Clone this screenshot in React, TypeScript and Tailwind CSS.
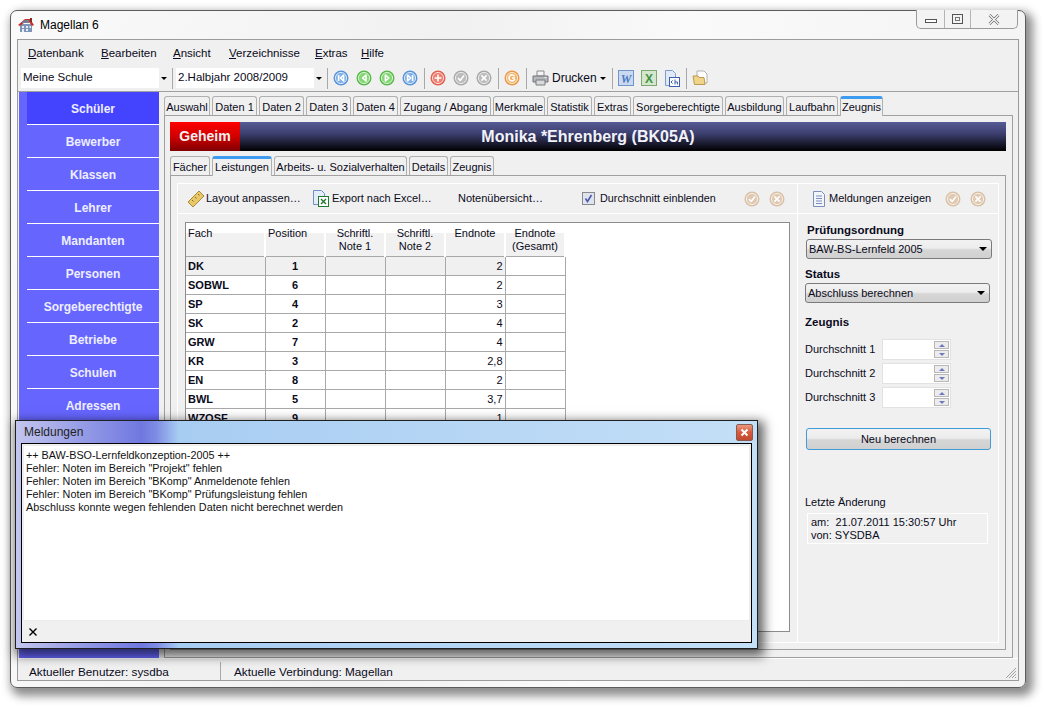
import type { ReactNode } from "react";

const ui = "font-['Liberation_Sans',sans-serif] text-[11px] text-[#0a0a20]";

const menu = [
  { label: "Datenbank", cls: "w-[73px]" },
  { label: "Bearbeiten", cls: "w-[72px]" },
  { label: "Ansicht", cls: "w-[56px]" },
  { label: "Verzeichnisse", cls: "w-[86px]" },
  { label: "Extras", cls: "w-[46px]" },
  { label: "Hilfe", cls: "w-[40px]" },
];

const topTabs = [
  { label: "Auswahl", cls: "w-[46px]" },
  { label: "Daten 1", cls: "w-[45px]" },
  { label: "Daten 2", cls: "w-[45px]" },
  { label: "Daten 3", cls: "w-[45px]" },
  { label: "Daten 4", cls: "w-[45px]" },
  { label: "Zugang / Abgang", cls: "w-[91px]" },
  { label: "Merkmale", cls: "w-[52px]" },
  { label: "Statistik", cls: "w-[45px]" },
  { label: "Extras", cls: "w-[37px]" },
  { label: "Sorgeberechtigte", cls: "w-[90px]" },
  { label: "Ausbildung", cls: "w-[59px]" },
  { label: "Laufbahn", cls: "w-[52px]" },
  { label: "Zeugnis", cls: "w-[43px]", active: true },
];

const innerTabs = [
  { label: "Fächer", cls: "w-[40px]" },
  { label: "Leistungen", cls: "w-[60px]", active: true },
  { label: "Arbeits- u. Sozialverhalten", cls: "w-[133px]" },
  { label: "Details", cls: "w-[39px]" },
  { label: "Zeugnis", cls: "w-[44px]" },
];

const nav = ["Schüler", "Bewerber", "Klassen", "Lehrer", "Mandanten", "Personen", "Sorgeberechtigte", "Betriebe", "Schulen", "Adressen"];

const rows = [
  ["DK", "1", "2"],
  ["SOBWL", "6", "2"],
  ["SP", "4", "3"],
  ["SK", "2", "4"],
  ["GRW", "7", "4"],
  ["KR", "3", "2,8"],
  ["EN", "8", "2"],
  ["BWL", "5", "3,7"],
  ["WZOSF", "9", "1"],
];

function Orb({ color, light, glyph }: { color: string; light: string; glyph: string }) {
  return (
    <svg width="16" height="16" viewBox="0 0 16 16" className="shrink-0">
      <circle cx="8" cy="8" r="7.5" fill={color} />
      <circle cx="8" cy="8" r="5.6" fill={light} stroke="#ffffff" strokeOpacity="0.75" strokeWidth="1" />
      <path d={glyph} fill="none" stroke="#ffffff" strokeWidth="1.6" strokeLinejoin="round" />
    </svg>
  );
}

const G_FIRST = "M5.6 5v6M10.6 5.2 7.4 8l3.2 2.8z";
const G_PREV = "M10 5 6.6 8l3.4 3z";
const G_NEXT = "M6.4 5 9.8 8l-3.4 3z";
const G_LAST = "M10.6 5v6M5.6 5.2 8.8 8l-3.2 2.8z";
const G_PLUS = "M8 4.6v6.8M4.6 8h6.8";
const G_CHECK = "M5 8l2.2 2.4L11 5.6";
const G_X = "M5.4 5.4l5.2 5.2M10.6 5.4l-5.2 5.2";
const G_C = "M10.6 6.4A3 3 0 1 0 10.8 9M8 8h3";

function Sep({ cls }: { cls: string }) {
  return <div className={`h-[21px] w-px shrink-0 bg-[#a8a8a8] ${cls}`} />;
}

function Combo({ label }: { label: string }) {
  return (
    <div className="flex h-[20px] w-[147px] shrink-0 items-center justify-between bg-white pl-[2px]">
      <span className="text-[11.5px]">{label}</span>
      <span className="flex h-full w-[9px] items-center justify-center bg-[#f0f0f0]">
        <span className="h-0 w-0 border-x-[3px] border-t-[3px] border-x-transparent border-t-black" />
      </span>
    </div>
  );
}

function Tab({ label, cls, active }: { label: string; cls: string; active?: boolean }) {
  return (
    <div
      className={`relative flex items-center justify-center rounded-t-[3px] border border-b-0 border-[#b0b0b0] bg-[#f0f0f0] whitespace-nowrap ${cls} ${
        active ? "z-10 -mb-px h-[20px] border-t-[3px] border-t-[#3d9bf0]" : "h-[19px] pt-[2px]"
      }`}
    >
      {label}
    </div>
  );
}

function Select({ label, cls }: { label: string; cls: string }) {
  return (
    <div className={`flex h-[20px] items-center justify-between rounded-[3px] border border-[#7a7a7a] bg-[linear-gradient(#f2f2f2_0%,#ececec_45%,#d6d6d6_55%,#d0d0d0_100%)] pr-[4px] pl-[2px] ${cls}`}>
      <span>{label}</span>
      <span className="h-0 w-0 border-x-[4px] border-t-[4px] border-x-transparent border-t-black" />
    </div>
  );
}

function Spin({ label }: { label: string }) {
  return (
    <div className="flex h-[21px] items-center">
      <span className="w-[77px] whitespace-nowrap">{label}</span>
      <div className="flex h-[21px] w-[69px] items-center justify-end border border-[#e2e2e2] bg-white pr-[1px]">
        <div className="flex flex-col gap-px">
          <span className="flex h-[8px] w-[15px] items-center justify-center border border-[#b8b8b8] bg-[#ececec]">
            <span className="h-0 w-0 border-x-[3px] border-b-[3px] border-x-transparent border-b-[#6f78c0]" />
          </span>
          <span className="flex h-[8px] w-[15px] items-center justify-center border border-[#b8b8b8] bg-[#ececec]">
            <span className="h-0 w-0 border-x-[3px] border-t-[3px] border-x-transparent border-t-[#6f78c0]" />
          </span>
        </div>
      </div>
    </div>
  );
}

function Th({ children, cls }: { children: ReactNode; cls: string }) {
  return (
    <th className={`border-r-2 border-r-white bg-[linear-gradient(#ffffff_0%,#ffffff_30%,#f1f1f1_30%,#f1f1f1_100%)] px-[2px] pt-[4px] align-top font-normal leading-[13px] ${cls}`}>
      {children}
    </th>
  );
}

export default function App() {
  return (
    <div className={`relative h-[707px] w-[1044px] overflow-hidden bg-white pt-[10px] pl-[10px] ${ui}`}>
      {/* main window */}
      <div className="flex h-[678px] w-[1016px] flex-col rounded-[7px] border border-[#5c5c5c] bg-[linear-gradient(100deg,#fafafa_0%,#f1f1f1_40%,#fafafa_60%,#f2f2f2_100%)] px-[6px] pb-[6px] shadow-[4px_5px_10px_3px_rgba(0,0,0,0.45)]">
        <div className="relative flex h-[28px] shrink-0 items-center">
          <svg width="16" height="16" viewBox="0 0 16 16" className="ml-[1px] shrink-0">
            <path d="M2 7h12v8H2z" fill="#7d95b8" />
            <path d="M4 9h2v2H4zM8 9h2v2H8zM11.5 9h1.5v2h-1.5zM4 12h2v3H4zM8 12h2v2H8z" fill="#e8eef8" />
            <path d="M0 8 7 2h5l4 6-2 1-3-4-4 0-5 4z" fill="#c9302a" />
            <path d="M3 6h8V3H7z" fill="#6e7f98" />
            <path d="M12 1h2v4h-2z" fill="#8a2a20" />
          </svg>
          <span className="ml-[6px] text-[12px] leading-none text-black">Magellan 6</span>
          <div className="absolute top-[-1px] right-[1px] flex h-[19px] w-[102px] rounded-b-[5px] border border-t-0 border-[#9a9a9a] bg-[#f3f3f3]">
            <div className="flex w-[28px] items-end justify-center border-r border-[#b5b5b5] pb-[5px]">
              <span className="h-[4px] w-[12px] border border-[#555] bg-white" />
            </div>
            <div className="flex w-[26px] items-center justify-center border-r border-[#b5b5b5]">
              <span className="flex h-[10px] w-[11px] items-center justify-center border border-[#555]">
                <span className="h-[4px] w-[5px] border border-[#777]" />
              </span>
            </div>
            <div className="flex flex-1 items-center justify-center">
              <svg width="12" height="11" viewBox="0 0 12 11">
                <path d="M1.5 1 10.5 10M10.5 1 1.5 10" stroke="#666" strokeWidth="2.6" />
                <path d="M1.5 1 10.5 10M10.5 1 1.5 10" stroke="#fff" strokeWidth="1.2" />
              </svg>
            </div>
          </div>
        </div>

        <div className="flex min-h-0 flex-1 flex-col border border-[#9b9b9b] bg-[#f0f0f0]">
          {/* menu */}
          <div className="flex h-[25px] shrink-0 items-center pt-[2px] pl-[10px] text-[11.5px]">
            {menu.map((m) => (
              <span key={m.label} className={m.cls}>
                <span className="underline">{m.label[0]}</span>
                {m.label.slice(1)}
              </span>
            ))}
          </div>

          {/* toolbar */}
          <div className="flex h-[27px] shrink-0 items-center border-b border-[#a0a0a0] pl-[3px]">
            <Combo label="Meine Schule" />
            <Sep cls="ml-[4px] mr-[3px]" />
            <Combo label="2.Halbjahr 2008/2009" />
            <Sep cls="ml-[4px] mr-[5px]" />
            <div className="flex items-center gap-[7px]">
              <Orb color="#5b93d8" light="#7fb2ea" glyph={G_FIRST} />
              <Orb color="#58b84a" light="#84d874" glyph={G_PREV} />
              <Orb color="#58b84a" light="#84d874" glyph={G_NEXT} />
              <Orb color="#5b93d8" light="#7fb2ea" glyph={G_LAST} />
            </div>
            <Sep cls="ml-[6px] mr-[5px]" />
            <div className="flex items-center gap-[7px]">
              <Orb color="#e0604f" light="#f0806f" glyph={G_PLUS} />
              <Orb color="#a8a8a8" light="#bcbcbc" glyph={G_CHECK} />
              <Orb color="#a8a8a8" light="#bcbcbc" glyph={G_X} />
            </div>
            <Sep cls="ml-[6px] mr-[5px]" />
            <Orb color="#e89a48" light="#f4b468" glyph={G_C} />
            <Sep cls="ml-[6px] mr-[5px]" />
            <svg width="17" height="16" viewBox="0 0 17 16" className="shrink-0">
              <path d="M5 1h7v5H5z" fill="#f4f4f4" stroke="#8a8a8a" />
              <path d="M1 6h15v6H1z" fill="#b4b8bc" stroke="#70747a" />
              <path d="M4 10h9v5H4z" fill="#d8dade" stroke="#7a7a7a" />
              <path d="M12.5 7.5h2" stroke="#f0f0f0" />
            </svg>
            <span className="ml-[3px] text-[12px]">Drucken</span>
            <span className="ml-[3px] h-0 w-0 border-x-[3px] border-t-[3px] border-x-transparent border-t-black" />
            <Sep cls="ml-[6px] mr-[5px]" />
            <svg width="16" height="16" viewBox="0 0 16 16" className="shrink-0">
              <rect x="0.5" y="0.5" width="15" height="15" fill="#c9d9f0" stroke="#6f95cc" />
              <text x="8" y="13" textAnchor="middle" fontSize="12" fontWeight="bold" fontStyle="italic" fontFamily="Liberation Serif" fill="#4a78c0">W</text>
            </svg>
            <svg width="16" height="16" viewBox="0 0 16 16" className="ml-[7px] shrink-0">
              <rect x="0.5" y="0.5" width="15" height="15" fill="#d4e6cc" stroke="#7ea873" />
              <text x="8" y="12.5" textAnchor="middle" fontSize="12" fontWeight="bold" fontFamily="Liberation Sans" fill="#3f9146">X</text>
            </svg>
            <svg width="16" height="17" viewBox="0 0 16 17" className="ml-[7px] shrink-0">
              <path d="M1.5.5h7l3 3v12h-10z" fill="#dfe9f7" stroke="#7d9cc8" />
              <rect x="5.5" y="7.5" width="10" height="9" fill="#fff" stroke="#3c5fb0" />
              <path d="M7 12l1.6-1.6M7 12l1.6 1.6M11 9.5v5M11 12h2.4v2.5" fill="none" stroke="#3c5fb0" />
            </svg>
            <Sep cls="ml-[6px] mr-[5px]" />
            <svg width="16" height="16" viewBox="0 0 16 16" className="shrink-0">
              <path d="M5 1h7l3 3v9H5z" fill="#fff" stroke="#b0b0b0" />
              <path d="M1 6h5l1 1.5h5l1 7H2.5z" fill="#f0d48a" stroke="#b89a50" />
            </svg>
          </div>

          <div className="flex min-h-0 flex-1">
            {/* sidebar */}
            <div className="ml-px w-[140px] shrink-0 bg-[#6666ff] pl-[8px]">
              {nav.map((n, i) => (
                <div
                  key={n}
                  className={`flex h-[33px] items-center justify-center border-b border-white pt-px text-[12px] font-bold text-[#eeeeff] ${
                    i === 0 ? "bg-[#4444ff]" : ""
                  }`}
                >
                  {n}
                </div>
              ))}
            </div>

            {/* main */}
            <div className="flex min-w-0 flex-1 flex-col pt-[4px] pl-[5px]">
              <div className="flex shrink-0 gap-[2px]">
                {topTabs.map((t) => (
                  <Tab key={t.label} {...t} />
                ))}
              </div>
              <div className="flex w-[849px] flex-1 flex-col border border-[#a0a0a0] pt-[6px] pr-[6px] pl-[5px]">
                <div className="relative flex h-[29px] w-full shrink-0 items-center justify-center bg-[linear-gradient(#575c96_0%,#3c3f6e_40%,#000000_100%)] text-[16px] font-bold text-[#f2f2fa]">
                  Monika *Ehrenberg (BK05A)
                  <div className="absolute inset-y-0 left-0 flex w-[70px] items-center justify-center bg-[linear-gradient(#ff0000_0%,#d00000_50%,#800000_100%)] text-[14px] text-[#f5f0f0]">
                    Geheim
                  </div>
                </div>
                <div className="mt-[5px] flex shrink-0 gap-[2px]">
                  {innerTabs.map((t) => (
                    <Tab key={t.label} {...t} />
                  ))}
                </div>
                <div className="flex min-h-0 flex-1 flex-col border border-[#a0a0a0] px-[6px] pt-[7px] pb-[6px]">
                  <div className="flex flex-1 border border-white">
                    {/* left column */}
                    <div className="flex w-[620px] shrink-0 flex-col border-r border-white">
                      <div className="flex h-[30px] items-center border-b border-white">
                        <svg width="18" height="18" viewBox="0 0 18 18" className="ml-[9px] shrink-0">
                          <path d="M1 12 12 1l5 5L6 17z" fill="#e8c868" stroke="#a88a38" />
                          <path d="M5 10l1.5 1.5M8 7l1.5 1.5M11 4l1.5 1.5" stroke="#8a6f28" />
                        </svg>
                        <span className="ml-px w-[94px] shrink-0 whitespace-nowrap">Layout anpassen…</span>
                        <svg width="17" height="17" viewBox="0 0 17 17" className="ml-[12px] shrink-0">
                          <path d="M1.5.5h8l3 3v11h-11z" fill="#e4ecf8" stroke="#6f8fc8" />
                          <rect x="6.5" y="6.5" width="10" height="10" fill="#fff" stroke="#1f7a2f" />
                          <path d="M9 9l5 5M14 9l-5 5" stroke="#1f7a2f" strokeWidth="1.4" />
                        </svg>
                        <span className="ml-[3px] w-[97px] shrink-0 whitespace-nowrap">Export nach Excel…</span>
                        <span className="ml-[29px] w-[85px] shrink-0 whitespace-nowrap">Notenübersicht…</span>
                        <span className="ml-[39px] flex h-[13px] w-[13px] shrink-0 items-center justify-center border border-[#8a8a8a] bg-[#dfe3f0]">
                          <svg width="9" height="9" viewBox="0 0 9 9">
                            <path d="M1.5 4.5l2 3L7.5 1" fill="none" stroke="#4a5aa8" strokeWidth="1.6" />
                          </svg>
                        </span>
                        <span className="ml-[5px] w-[116px] shrink-0 text-[10.8px] whitespace-nowrap">Durchschnitt einblenden</span>
                        <div className="ml-[28px] flex shrink-0 gap-[9px]">
                          <Orb color="#d9bfa4" light="#e0c9b2" glyph={G_CHECK} />
                          <Orb color="#d9bfa4" light="#e0c9b2" glyph={G_X} />
                        </div>
                      </div>
                      <div className="mt-[8px] ml-[7px] h-[410px] w-[605px] border border-[#8c8c8c] bg-white">
                        <table className="table-fixed border-collapse">
                          <thead>
                            <tr className="h-[33px]">
                              <Th cls="w-[79px] text-left">Fach</Th>
                              <Th cls="w-[60px] text-left">Position</Th>
                              <Th cls="w-[60px] text-center">Schriftl.<br />Note 1</Th>
                              <Th cls="w-[60px] text-center">Schriftl.<br />Note 2</Th>
                              <Th cls="w-[60px] text-center">Endnote</Th>
                              <Th cls="w-[60px] text-center">Endnote<br />(Gesamt)</Th>
                            </tr>
                          </thead>
                          <tbody>
                            {rows.map((r, i) => (
                              <tr key={r[0]} className="h-[19px]">
                                <td className={`border border-l-0 border-[#a8a8a8] px-[2px] pt-px pb-0 font-bold leading-none ${i === 0 ? "bg-[#f0f0f0]" : ""}`}>{r[0]}</td>
                                <td className={`border border-[#a8a8a8] px-0 pt-px pb-0 text-center font-bold leading-none ${i === 0 ? "bg-[#f0f0f0]" : ""}`}>{r[1]}</td>
                                <td className={`border border-[#a8a8a8] ${i === 0 ? "bg-[#f0f0f0]" : ""}`} />
                                <td className={`border border-[#a8a8a8] ${i === 0 ? "bg-[#f0f0f0]" : ""}`} />
                                <td className={`border border-[#a8a8a8] px-[2px] pt-px pb-0 text-right leading-none ${i === 0 ? "bg-[#f0f0f0]" : ""}`}>{r[2]}</td>
                                <td className="border border-[#a8a8a8]" />
                              </tr>
                            ))}
                          </tbody>
                        </table>
                      </div>
                    </div>

                    {/* right column */}
                    <div className="flex min-w-0 flex-1 flex-col">
                      <div className="flex h-[30px] items-center border-b border-white">
                        <svg width="14" height="16" viewBox="0 0 14 16" className="ml-[14px] shrink-0">
                          <path d="M1.5.5h8l3 3v12h-11z" fill="#f2f5fb" stroke="#7d8fb8" />
                          <path d="M4 5h6M4 7.5h6M4 10h6M4 12.5h6" stroke="#7d8fb8" />
                        </svg>
                        <span className="ml-[3px] w-[98px] shrink-0 whitespace-nowrap">Meldungen anzeigen</span>
                        <div className="ml-[18px] flex shrink-0 gap-[9px]">
                          <Orb color="#d9bfa4" light="#e0c9b2" glyph={G_CHECK} />
                          <Orb color="#d9bfa4" light="#e0c9b2" glyph={G_X} />
                        </div>
                      </div>
                      <div className="flex flex-1 flex-col pl-[7px]">
                        <div className="mt-[9px] ml-[2px] text-[11.5px] leading-[14px] font-bold">Prüfungsordnung</div>
                        <Select label="BAW-BS-Lernfeld 2005" cls="ml-[1px] mt-[2px] w-[186px]" />
                        <div className="mt-[8px] text-[11.5px] leading-[14px] font-bold">Status</div>
                        <Select label="Abschluss berechnen" cls="mt-[2px] w-[185px]" />
                        <div className="mt-[12px] text-[11.5px] leading-[14px] font-bold">Zeugnis</div>
                        <div className="mt-[10px] flex flex-col gap-[3px]">
                          <Spin label="Durchschnitt 1" />
                          <Spin label="Durchschnitt 2" />
                          <Spin label="Durchschnitt 3" />
                        </div>
                        <button className="mt-[20px] ml-[1px] h-[22px] w-[185px] rounded-[3px] border border-[#3d9bd8] bg-[linear-gradient(#f2f2f2_0%,#ececec_45%,#d6d6d6_55%,#d0d0d0_100%)]">
                          Neu berechnen
                        </button>
                        <div className="mt-[45px] leading-[14px]">Letzte Änderung</div>
                        <div className="mt-[4px] ml-[2px] h-[31px] w-[181px] border border-white pt-[2px] pl-[3px] leading-[13px]">
                          am:&nbsp; 21.07.2011 15:30:57 Uhr
                          <br />
                          von: SYSDBA
                        </div>
                      </div>
                    </div>
                  </div>
                </div>
                <div className="h-[7px] shrink-0" />
              </div>
            </div>
          </div>

          {/* status bar */}
          <div className="relative flex h-[22px] shrink-0 items-center border-t border-white pt-[3px] text-[11.75px]">
            <span className="w-[202px] pt-px pl-[11px]">Aktueller Benutzer: sysdba</span>
            <span className="h-[18px] w-px self-end bg-[#a8a8a8]" />
            <span className="pt-px pl-[13px]">Aktuelle Verbindung: Magellan</span>
            <svg width="14" height="14" viewBox="0 0 14 14" className="absolute right-px bottom-px">
              <path d="M13 3 3 13M13 6 6 13M13 9l-4 4M13 12l-1 1" stroke="#a0a0a0" />
            </svg>
          </div>
        </div>
      </div>

      {/* message dialog */}
      <div className="absolute top-[420px] left-[15px] flex h-[229px] w-[743px] flex-col border border-[#202020] bg-[linear-gradient(90deg,#c3c6ee_0%,#9aa0e6_8%,#6f78e0_17%,#7f8ee4_19%,#a8cdf2_22%,#c4dff7_100%)] px-[5px] pb-[5px] shadow-[3px_4px_10px_3px_rgba(0,0,0,0.6)]">
        <div className="relative flex h-[22px] shrink-0 items-center pl-[3px] text-[12px] text-[#222]">
          Meldungen
          <span className="absolute top-[3px] right-[-1px] flex h-[17px] w-[17px] items-center justify-center rounded-[2px] border border-[#8a5a50] bg-[linear-gradient(#e89a80_0%,#d9593a_50%,#c04a30_100%)]">
            <svg width="9" height="9" viewBox="0 0 9 9">
              <path d="M1.5 1.5l6 6M7.5 1.5l-6 6" stroke="#fff" strokeWidth="2" />
            </svg>
          </span>
        </div>
        <div className="flex min-h-0 flex-1 flex-col border border-black bg-[#f0f0f0]">
          <div className="m-[1px] mb-0 flex-1 border border-[#ececec] bg-white px-[2px] pt-[3px] text-[10.8px] leading-[13px] text-[#111]">
            <div>++ BAW-BSO-Lernfeldkonzeption-2005 ++</div>
            <div>Fehler: Noten im Bereich "Projekt" fehlen</div>
            <div>Fehler: Noten im Bereich "BKomp" Anmeldenote fehlen</div>
            <div>Fehler: Noten im Bereich "BKomp" Prüfungsleistung fehlen</div>
            <div>Abschluss konnte wegen fehlenden Daten nicht berechnet werden</div>
          </div>
          <div className="flex h-[21px] shrink-0 items-center pl-[6px]">
            <svg width="10" height="10" viewBox="0 0 10 10">
              <path d="M1.5 1.5l7 7M8.5 1.5l-7 7" stroke="#000" strokeWidth="1.4" />
            </svg>
          </div>
        </div>
      </div>
    </div>
  );
}
